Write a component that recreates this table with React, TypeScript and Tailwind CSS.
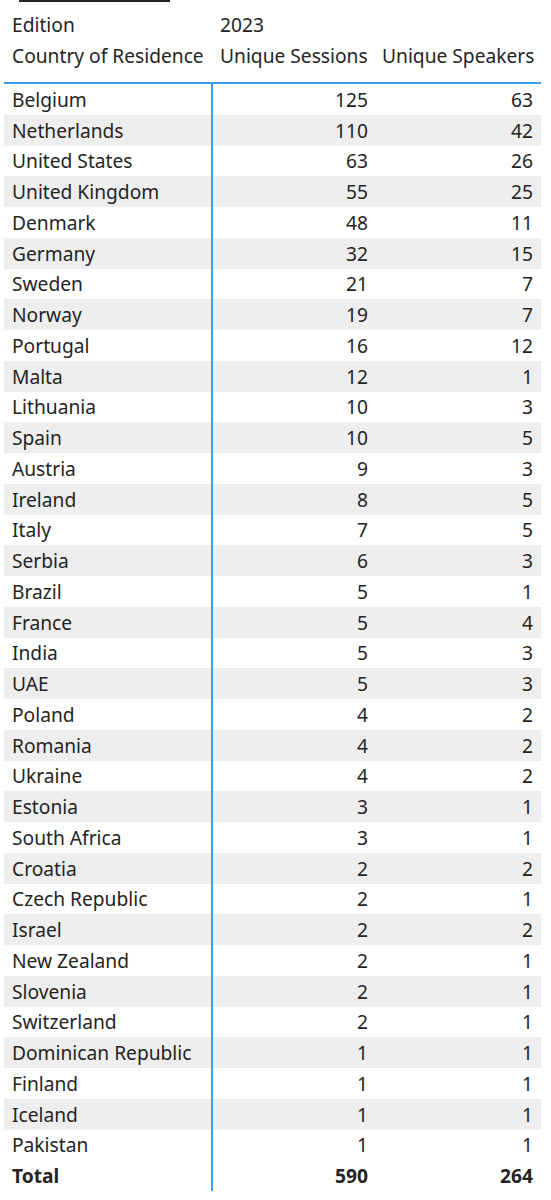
import * as React from "react";

const rows: [string, number, number][] = [
  ["Belgium", 125, 63],
  ["Netherlands", 110, 42],
  ["United States", 63, 26],
  ["United Kingdom", 55, 25],
  ["Denmark", 48, 11],
  ["Germany", 32, 15],
  ["Sweden", 21, 7],
  ["Norway", 19, 7],
  ["Portugal", 16, 12],
  ["Malta", 12, 1],
  ["Lithuania", 10, 3],
  ["Spain", 10, 5],
  ["Austria", 9, 3],
  ["Ireland", 8, 5],
  ["Italy", 7, 5],
  ["Serbia", 6, 3],
  ["Brazil", 5, 1],
  ["France", 5, 4],
  ["India", 5, 3],
  ["UAE", 5, 3],
  ["Poland", 4, 2],
  ["Romania", 4, 2],
  ["Ukraine", 4, 2],
  ["Estonia", 3, 1],
  ["South Africa", 3, 1],
  ["Croatia", 2, 2],
  ["Czech Republic", 2, 1],
  ["Israel", 2, 2],
  ["New Zealand", 2, 1],
  ["Slovenia", 2, 1],
  ["Switzerland", 2, 1],
  ["Dominican Republic", 1, 1],
  ["Finland", 1, 1],
  ["Iceland", 1, 1],
  ["Pakistan", 1, 1],
];

function Row({
  name,
  sessions,
  speakers,
  striped = false,
  bold = false,
}: {
  name: string;
  sessions: number;
  speakers: number;
  striped?: boolean;
  bold?: boolean;
}) {
  return (
    <div
      className={`flex h-[30.76px] items-center ${striped ? "bg-[#eeeeee]" : ""} ${
        bold ? "font-bold" : ""
      }`}
    >
      <div className="flex h-full w-[209px] items-center border-r-2 border-[#3d9df3] pl-[8px] pt-[2px]">
        {name}
      </div>
      <div className="w-[162px] pr-[7px] pt-[2px] text-right">{sessions}</div>
      <div className="w-[166px] pr-[8px] pt-[2px] text-right">{speakers}</div>
    </div>
  );
}

export default function App() {
  return (
    <div
      className="h-[1200px] w-[551px] bg-white text-[19.2px] text-[#252423]"
      style={{ fontFamily: '"Noto Sans", sans-serif' }}
    >
      <div className="ml-[19px] h-[2px] w-[151px] bg-[#252423]" />
      <div className="ml-[4px] w-[537px] pt-[8px]">
        <div className="flex h-[31px] items-center">
          <div className="w-[209px] pl-[8px]">Edition</div>
          <div className="pl-[7px]">2023</div>
        </div>
        <div className="flex h-[31px] items-center">
          <div className="w-[209px] pl-[8px]">Country of Residence</div>
          <div className="w-[162px] pl-[7px]">Unique Sessions</div>
          <div className="w-[166px] pl-[7px]">Unique Speakers</div>
        </div>
        <div className="mt-[10px] border-t-2 border-[#3d9df3]">
          {rows.map(([name, s, p], i) => (
            <Row key={name} name={name} sessions={s} speakers={p} striped={i % 2 === 1} />
          ))}
          <Row name="Total" sessions={590} speakers={264} bold />
        </div>
      </div>
    </div>
  );
}
